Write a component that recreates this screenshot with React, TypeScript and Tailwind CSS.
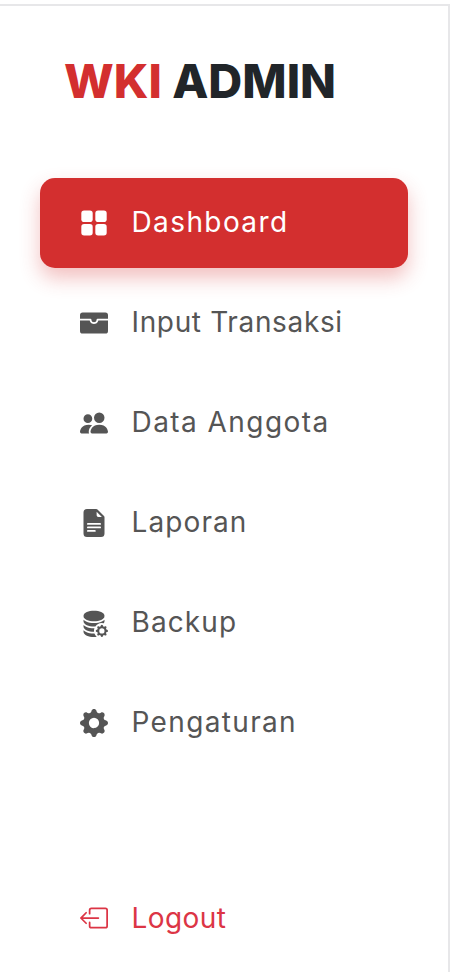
import { BsWalletFill, BsPeopleFill, BsFileEarmarkTextFill, BsDatabaseFillGear, BsGearFill, BsBoxArrowLeft } from "react-icons/bs";
import type { ComponentType } from "react";

function GridIcon({ className }: { className?: string }) {
  return (
    <svg viewBox="0 0 16 16" fill="currentColor" className={className}>
      <rect x="0.75" y="0.9" width="6.5" height="6.5" rx="1.6" />
      <rect x="8.75" y="0.9" width="6.5" height="6.5" rx="1.6" />
      <rect x="0.75" y="8.6" width="6.5" height="6.5" rx="1.6" />
      <rect x="8.75" y="8.6" width="6.5" height="6.5" rx="1.6" />
    </svg>
  );
}

const items: { label: string; Icon: ComponentType<{ className?: string }>; active?: boolean; tracking: string }[] = [
  { label: "Dashboard", Icon: GridIcon, active: true, tracking: "tracking-[1.4px]" },
  { label: "Input Transaksi", Icon: BsWalletFill, tracking: "tracking-[0.65px]" },
  { label: "Data Anggota", Icon: BsPeopleFill, tracking: "tracking-[1.45px]" },
  { label: "Laporan", Icon: BsFileEarmarkTextFill, tracking: "tracking-[1.1px]" },
  { label: "Backup", Icon: BsDatabaseFillGear, tracking: "tracking-[1.1px]" },
  { label: "Pengaturan", Icon: BsGearFill, tracking: "tracking-[1.35px]" },
];

export default function App() {
  return (
    <div className="h-[972px] w-[450px] overflow-hidden bg-white pt-1 font-['Inter',sans-serif]">
      <div className="flex h-full flex-col border-t-2 border-r-2 border-[#e7e7e9] px-10 pb-[9px]">
        <h1 className="ml-[24px] mt-[45px] text-[47px] leading-[60px] font-extrabold whitespace-nowrap text-[#212529]">
          <span className="text-[#d32f2f]">WKI</span> ADMIN
        </h1>
        <nav className="mt-[67px] flex w-[368px] flex-col gap-2.5">
          {items.map(({ label, Icon, active, tracking }) => (
            <a
              key={label}
              className={
                active
                  ? "flex h-[90px] items-center gap-[23.5px] rounded-[15px] bg-[#d32f2f] px-10 text-white shadow-[0_10px_20px_rgba(211,47,47,0.3)]"
                  : "flex h-[90px] items-center gap-[23.5px] rounded-[15px] px-10 text-[#555555]"
              }
            >
              <Icon className="size-7 shrink-0" />
              <span className={`text-[28px] leading-[42px] whitespace-nowrap pb-0.5 ${tracking}`}>{label}</span>
            </a>
          ))}
        </nav>
        <a className="mt-auto flex h-[90px] w-[368px] items-center gap-[23.5px] px-10 text-[#dc3545]">
          <BsBoxArrowLeft className="size-7 shrink-0" />
          <span className="text-[28px] leading-[42px] tracking-[0.4px]">Logout</span>
        </a>
      </div>
    </div>
  );
}
